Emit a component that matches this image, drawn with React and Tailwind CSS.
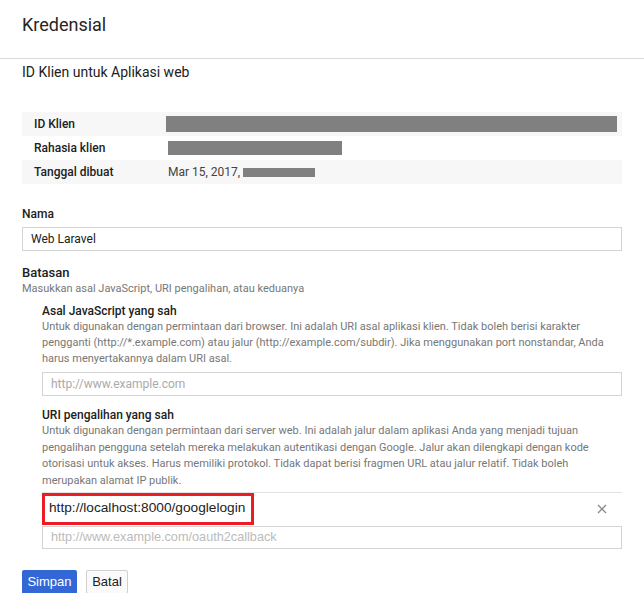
export default function App() {
  return (
    <div className="w-[644px] h-[593px] bg-white overflow-hidden font-['Roboto',sans-serif] text-[#212121]">
      {/* Header */}
      <div className="h-[59px] border-b border-[#dadada] pt-[13px] px-[22px]">
        <h1 className="text-[18px] leading-6 font-normal text-[#262626]">Kredensial</h1>
      </div>

      <div className="px-[22px]">
        <h2 className="mt-[3px] text-[14px] leading-5">ID Klien untuk Aplikasi web</h2>

        {/* Info table */}
        <div className="mt-[30px] w-[600px] text-[12px]">
          <div className="h-6 flex items-center bg-[#f7f7f7]">
            <div className="w-[144px] pl-3 font-medium">ID Klien</div>
            <div className="h-4 w-[451px] bg-[#808080]" />
          </div>
          <div className="h-6 flex items-center">
            <div className="w-[146px] pl-3 font-medium">Rahasia klien</div>
            <div className="h-[14px] w-[174px] bg-[#808080]" />
          </div>
          <div className="h-6 flex items-center bg-[#f7f7f7]">
            <div className="w-[146px] pl-3 font-medium">Tanggal dibuat</div>
            <span className="text-[#444]">Mar 15, 2017,</span>
            <div className="ml-[3px] h-[9px] w-[72px] bg-[#808080]" />
          </div>
        </div>

        {/* Nama */}
        <div className="mt-[22px] text-[12px] leading-4 font-medium">Nama</div>
        <div className="mt-[5px] h-6 w-[600px] border border-[#d4d4d4] flex items-center px-2 text-[12px]">
          Web Laravel
        </div>

        {/* Batasan */}
        <div className="mt-[14px] text-[13px] leading-4 font-medium">Batasan</div>
        <div className="text-[11px] leading-4 text-[#777]">
          Masukkan asal JavaScript, URI pengalihan, atau keduanya
        </div>

        <div className="ml-5 w-[580px]">
          <div className="mt-[6px] text-[12px] leading-4 font-medium">Asal JavaScript yang sah</div>
          <p className="text-[11px] leading-4 text-[#777]">
            Untuk digunakan dengan permintaan dari browser. Ini adalah URI asal aplikasi klien. Tidak boleh berisi karakter
            <br />
            pengganti (http://*.example.com) atau jalur (http://example.com/subdir). Jika menggunakan port nonstandar, Anda
            <br />
            harus menyertakannya dalam URI asal.
          </p>
          <div className="mt-[5px] h-6 border border-[#d4d4d4] flex items-center px-2 text-[12px] text-[#aaa]">
            http://www.example.com
          </div>

          <div className="mt-[11px] text-[12px] leading-4 font-medium">URI pengalihan yang sah</div>
          <p className="text-[11px] leading-[16.5px] text-[#777]">
            Untuk digunakan dengan permintaan dari server web. Ini adalah jalur dalam aplikasi Anda yang menjadi tujuan
            <br />
            pengalihan pengguna setelah mereka melakukan autentikasi dengan Google. Jalur akan dilengkapi dengan kode
            <br />
            otorisasi untuk akses. Harus memiliki protokol. Tidak dapat berisi fragmen URL atau jalur relatif. Tidak boleh
            <br />
            merupakan alamat IP publik.
          </p>

          <div className="relative mt-[3px] h-8 border-t border-[#e3e3e3] flex items-center justify-between pl-[7px] pr-[15px]">
            <span className="font-['Liberation_Sans',sans-serif] text-[13.7px] text-[#222]">
              http://localhost:8000/googlelogin
            </span>
            <svg width="10" height="10" viewBox="0 0 10 10" className="text-[#888]">
              <path d="M1 1L9 9M9 1L1 9" stroke="currentColor" strokeWidth="1.3" />
            </svg>
            <div className="absolute left-0 top-0 w-[212px] h-[32px] border-[3px] border-[#ec1c24]" />
          </div>
          <div className="mt-[2px] h-[23px] border border-[#d4d4d4] flex items-center px-2 font-['Liberation_Sans',sans-serif] text-[12.7px] text-[#bbb]">
            http://www.example.com/oauth2callback
          </div>
        </div>

        {/* Buttons */}
        <div className="mt-[21px] flex gap-[9px] font-['Liberation_Sans',sans-serif] text-[13px]">
          <button className="h-6 w-[55px] rounded-[2px] bg-[#3367d6] text-white">Simpan</button>
          <button className="h-6 w-[42px] rounded-[2px] border border-[#d0d0d0] bg-[#fafafa] text-[#222]">Batal</button>
        </div>
      </div>
    </div>
  );
}
